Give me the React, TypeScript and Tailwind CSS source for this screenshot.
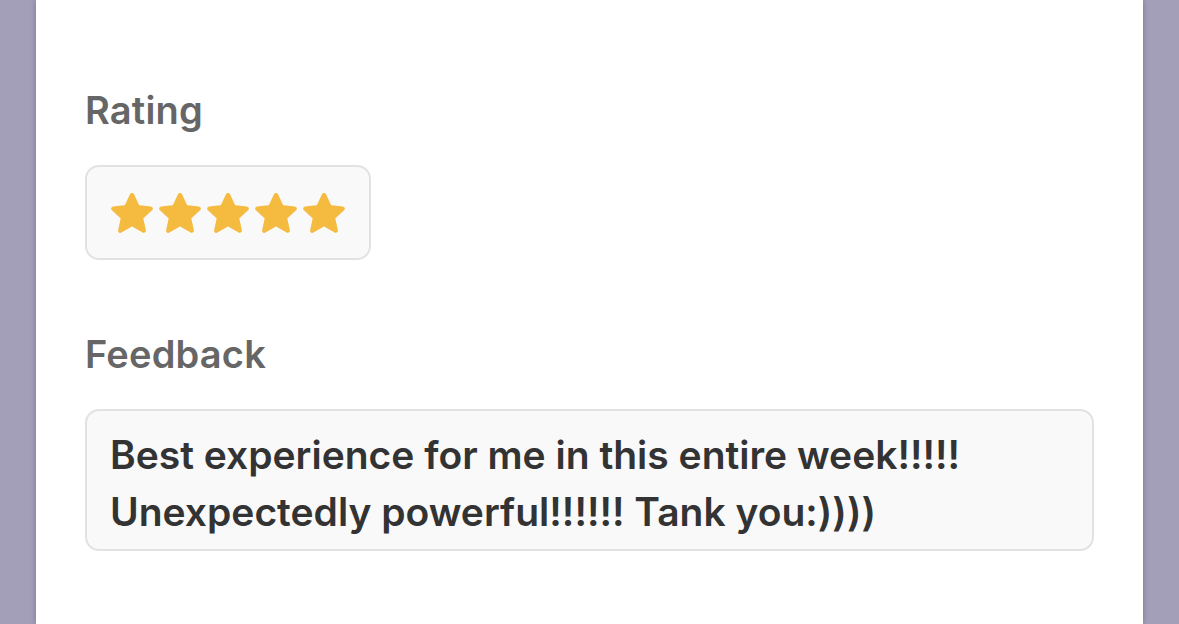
import React from 'react';

function Star() {
  return (
    <svg width="42" height="40" viewBox="1.8 1.1 20.4 19.6" className="shrink-0">
      <path
        d="M12 2.2 L14.75 8.1 L21.1 8.8 L16.35 13.15 L17.7 19.5 L12 16.25 L6.3 19.5 L7.65 13.15 L2.9 8.8 L9.25 8.1 Z"
        fill="#f4bb40"
        stroke="#f4bb40"
        strokeWidth="2.2"
        strokeLinejoin="round"
      />
    </svg>
  );
}

export default function App() {
  return (
    <div className="w-[1179px] h-[624px] overflow-hidden bg-[#a49fb9] flex" style={{ fontFamily: 'Inter, "Noto Sans", sans-serif' }}>
      <div className="ml-[36px] w-[1107px] h-full bg-white shadow-[0_0_6px_rgba(40,30,70,0.35)] pl-[49px] pt-[87px]">
        <div className="text-[38px] leading-[46px] font-semibold text-[#666666] tracking-[0.2px]">Rating</div>
        <div className="mt-[32px] w-[286px] h-[95px] rounded-[14px] border-2 border-[#e2e2e2] bg-[#f9f9f9] flex items-center gap-[6px] pl-[24px]">
          <Star />
          <Star />
          <Star />
          <Star />
          <Star />
        </div>
        <div className="mt-[71px] text-[38px] leading-[46px] font-semibold text-[#666666] tracking-[0.2px]">Feedback</div>
        <div className="mt-[32px] w-[1009px] h-[142px] rounded-[14px] border-2 border-[#e2e2e2] bg-[#f9f9f9] pl-[23px] pt-[15px] text-[39px] leading-[57px] font-semibold text-[#333333]">
          Best experience for me in this entire week!!!!!
          <br />
          Unexpectedly powerful!!!!!! Tank you:))))
        </div>
      </div>
    </div>
  );
}
